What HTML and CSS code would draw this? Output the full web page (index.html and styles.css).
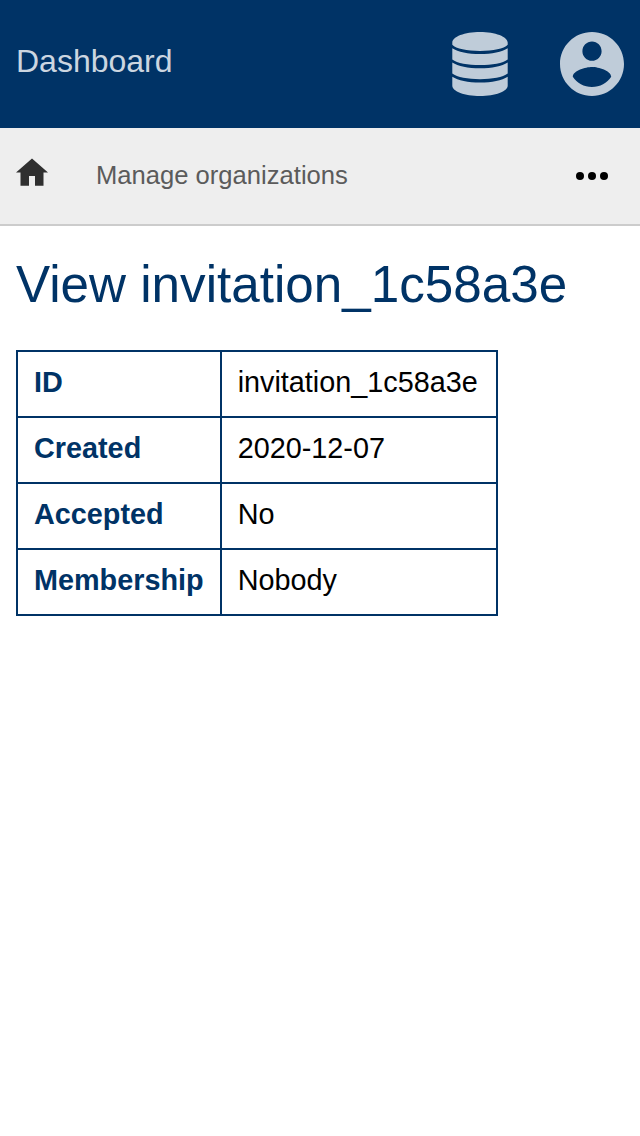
FILE: index.html
```html
<!DOCTYPE html>
<html lang="en">
<head>
<meta charset="utf-8">
<title>View invitation_1c58a3e</title>
<link rel="stylesheet" href="styles.css">
</head>
<body>
<header class="header">
  <span class="title">Dashboard</span>
  <nav class="actions">
    <svg class="database" viewBox="0 0 56 64"><path d="M.3 10.500C.3 4.700 12.700 0 28 0s27.700 4.700 27.700 10.500v2.300C52 16.800 41 19 28 19S4 16.800.3 12.800zM.3 16.200C6 19.900 16 22 28 22s22-2.100 27.700-5.800v11.200C51 31 40 33.100 28 33.100S5 31 .3 27.400zM.3 30.500C6 34.200 16 36.300 28 36.300s22-2.100 27.700-5.800v11.100C51 45.200 40 47.300 28 47.300S5 45.200.3 41.600zM.3 44.700C6 48.400 16 50.500 28 50.500s22-2.100 27.700-5.800v9C55.700 59.300 43.300 64 28 64S.3 59.300.3 53.700z"/></svg>
    <svg class="account" viewBox="2 2 20 20"><path d="M12 2C6.480 2 2 6.480 2 12s4.480 10 10 10 10-4.480 10-10S17.520 2 12 2zm0 3c1.660 0 3 1.340 3 3s-1.340 3-3 3-3-1.340-3-3 1.340-3 3-3zm0 14.200c-2.500 0-4.710-1.280-6-3.220.030-1.990 4-3.080 6-3.080 1.990 0 5.970 1.090 6 3.080-1.290 1.940-3.500 3.220-6 3.220z"/></svg>
  </nav>
</header>
<nav class="menu">
  <svg class="home" viewBox="0 0 32 28"><path d="M16 .4 32 14.500h-4.500V27.700H19V18h-6v9.700H4.500V14.500H0z"/></svg>
  <span class="link">Manage organizations</span>
  <svg class="more" viewBox="0 0 32 8"><circle cx="4" cy="4" r="4"/><circle cx="16" cy="4" r="4"/><circle cx="28" cy="4" r="4"/></svg>
</nav>
<main class="content">
  <h1 class="heading">View invitation_1c58a3e</h1>
  <table class="details">
    <tr><th>ID</th><td>invitation_1c58a3e</td></tr>
    <tr><th>Created</th><td>2020-12-07</td></tr>
    <tr><th>Accepted</th><td>No</td></tr>
    <tr><th>Membership</th><td>Nobody</td></tr>
  </table>
</main>
</body>
</html>
```
FILE: styles.css
```css
* { box-sizing: border-box; }
body { margin: 0; background: #fff; color: #000; font-family: "Liberation Sans", Arial, sans-serif; }
.header { display: flex; justify-content: space-between; height: 128px; padding: 32px 16px; background: #036; }
.title { font-size: 32px; line-height: 58px; color: #ccd6e0; }
.actions { display: flex; gap: 52px; fill: #bfccd9; }
.database { width: 56px; height: 64px; }
.account { width: 64px; height: 64px; }
.menu { display: flex; align-items: center; height: 98px; padding: 0 32px 0 16px; background: #eee; border-bottom: 2px solid #ccc; }
.home { width: 32px; height: 28px; margin-bottom: 8px; fill: #2f2f2f; }
.link { margin: 0 0 2px 48px; font-size: 25.600px; color: #5b5b5b; }
.more { width: 32px; height: 8px; margin-left: auto; }
.content { padding: 30px 16px; }
.heading { margin: 0 0 36px; font-size: 51.200px; line-height: 58px; font-weight: 400; color: #036; white-space: nowrap; }
.details { border-collapse: collapse; font-size: 28.800px; line-height: 32px; }
.details th, .details td { height: 66px; padding: 0 16px 4px; border: 2px solid #036; text-align: left; }
.details td { padding-right: 18px; }
.details th { color: #036; }
```
